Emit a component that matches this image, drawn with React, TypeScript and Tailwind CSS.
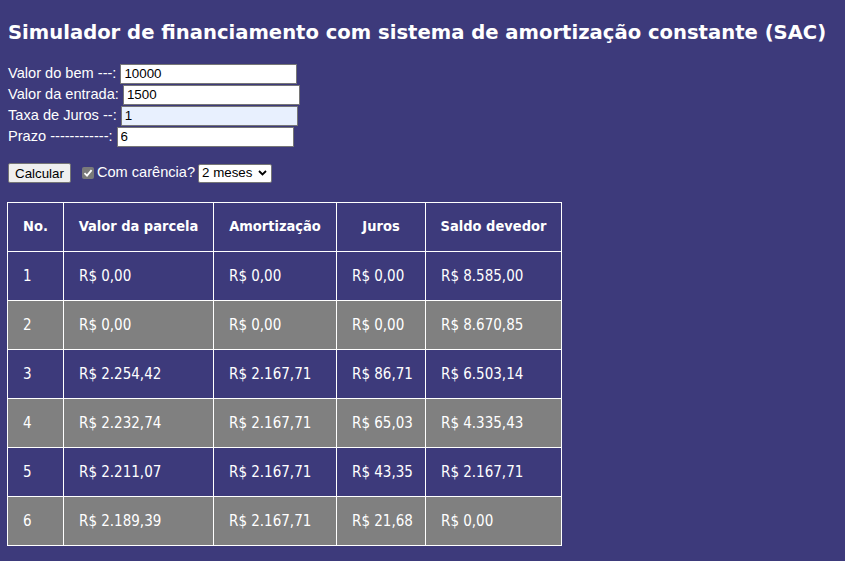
import { useState } from "react";

const rows = [
  ["1", "R$ 0,00", "R$ 0,00", "R$ 0,00", "R$ 8.585,00"],
  ["2", "R$ 0,00", "R$ 0,00", "R$ 0,00", "R$ 8.670,85"],
  ["3", "R$ 2.254,42", "R$ 2.167,71", "R$ 86,71", "R$ 6.503,14"],
  ["4", "R$ 2.232,74", "R$ 2.167,71", "R$ 65,03", "R$ 4.335,43"],
  ["5", "R$ 2.211,07", "R$ 2.167,71", "R$ 43,35", "R$ 2.167,71"],
  ["6", "R$ 2.189,39", "R$ 2.167,71", "R$ 21,68", "R$ 0,00"],
];

const widths = ["w-[56px]", "w-[150px]", "w-[123px]", "w-[89px]", "w-[136px]"];

function Field({ label, value, blue }: { label: string; value: string; blue?: boolean }) {
  return (
    <div className="flex items-center h-[21px]">
      <span className="whitespace-nowrap">{label}</span>
      <input
        defaultValue={value}
        className={`ml-[4px] w-[177px] h-[20px] border border-[#767676] px-[3px] text-[13.33px] text-black outline-none ${
          blue ? "bg-[#e8f0fe]" : "bg-white"
        }`}
        style={{ fontFamily: "'Liberation Sans', Arial, sans-serif" }}
      />
    </div>
  );
}

export default function App() {
  const [carencia, setCarencia] = useState(true);

  return (
    <div className="min-h-[561px] bg-[#3d3a7b] text-white pt-[19px] pl-[8px]">
      <h1
        className="text-[19.6px] font-bold leading-[28px] mb-[16px] whitespace-nowrap"
        style={{ fontFamily: "'DejaVu Sans', Verdana, sans-serif" }}
      >
        Simulador de financiamento com sistema de amortização constante (SAC)
      </h1>

      <div className="text-[14.6px]" style={{ fontFamily: "'Liberation Sans', Arial, sans-serif" }}>
        <Field label="Valor do bem ---:" value="10000" />
        <Field label="Valor da entrada:" value="1500" />
        <Field label="Taxa de Juros --:" value="1" blue />
        <Field label="Prazo ------------:" value="6" />

        <div className="flex items-center mt-[16px] h-[20px]">
          <button className="h-[20px] px-[6px] bg-[#efefef] border border-[#767676] rounded-[2px] text-[13.33px] text-black">
            Calcular
          </button>
          <label className="flex items-center ml-[11px] cursor-pointer">
            <span
              onClick={() => setCarencia(!carencia)}
              className="w-[12px] h-[12px] rounded-[2px] bg-[#7a7a7a] flex items-center justify-center"
            >
              {carencia && (
                <svg width="10" height="10" viewBox="0 0 10 10">
                  <path d="M1.5 5.2 L4 7.6 L8.6 2.2" stroke="white" strokeWidth="1.8" fill="none" />
                </svg>
              )}
            </span>
            <span className="ml-[3px]">Com carência?</span>
          </label>
          <div className="ml-[3px] h-[19px] w-[74px] bg-white border border-[#767676] rounded-[2px] flex items-center justify-between pl-[3px] pr-[4px] text-[13.33px] text-black">
            <span>2 meses</span>
            <svg width="9" height="6" viewBox="0 0 9 6">
              <path d="M1 1 L4.5 4.5 L8 1" stroke="black" strokeWidth="1.8" fill="none" />
            </svg>
          </div>
        </div>
      </div>

      <table
        className="mt-[19px] ml-[-1px] w-[555px] border-collapse text-[15px] table-fixed"
        style={{ fontFamily: "'DejaVu Sans Condensed', Tahoma, 'DejaVu Sans', sans-serif" }}
      >
        <thead>
          <tr>
            {["No.", "Valor da parcela", "Amortização", "Juros", "Saldo devedor"].map((h, i) => (
              <th
                key={h}
                className={`${widths[i]} h-[49px] border border-white font-bold text-center px-[12px] whitespace-nowrap text-[14.5px]`}
              >
                {h}
              </th>
            ))}
          </tr>
        </thead>
        <tbody>
          {rows.map((r, ri) => (
            <tr key={r[0]} className={ri % 2 === 1 ? "bg-[#808080]" : ""}>
              {r.map((c, ci) => (
                <td key={ci} className="h-[49px] border border-white text-left px-[15px] whitespace-nowrap">
                  {c}
                </td>
              ))}
            </tr>
          ))}
        </tbody>
      </table>
    </div>
  );
}
